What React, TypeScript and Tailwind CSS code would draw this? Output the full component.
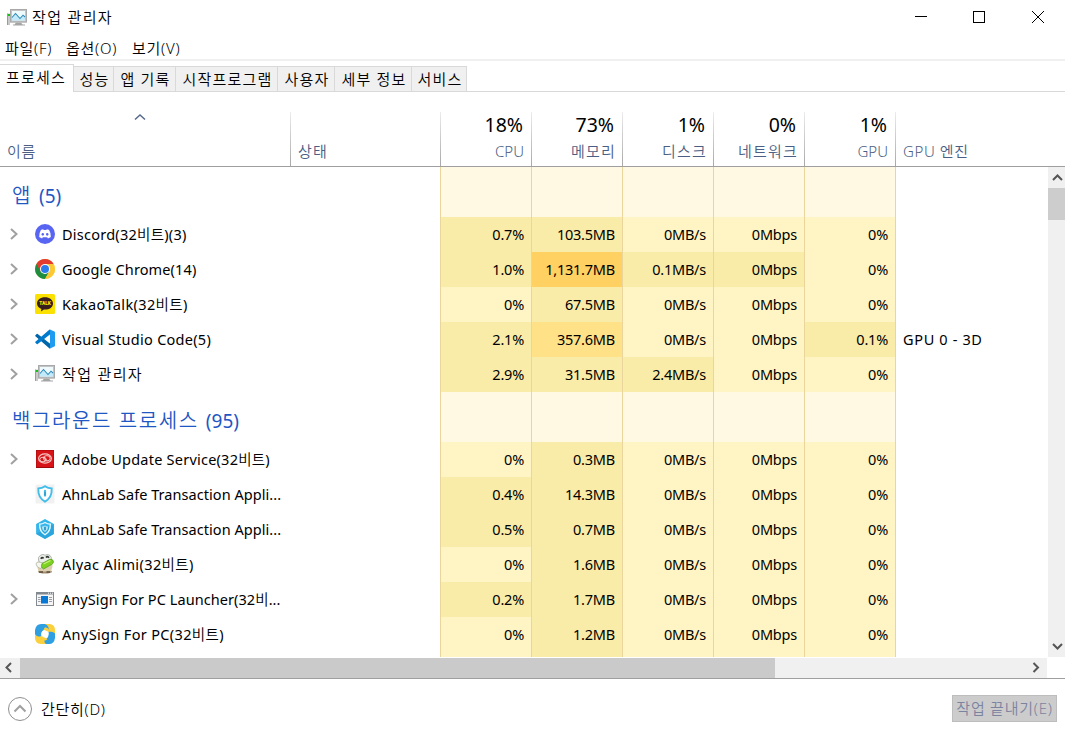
import type { ReactNode } from "react";

type Heat = "low" | "mid" | "high" | "max";
type Cell = [string, Heat];

interface Process {
  name: string;
  tracking: string;
  icon: ReactNode;
  expandable: boolean;
  cells: Cell[];
  engine?: string;
}

const heatClass: Record<Heat, string> = {
  low: "bg-[#fff4c4]",
  mid: "bg-[#f9eca8]",
  high: "bg-[#ffe287]",
  max: "bg-[#ffd062]",
};

// Hangul runs use a lighter weight; Latin and digits keep the inherited one.
function Label({ text, className = "" }: { text: string; className?: string }) {
  return (
    <span className={className}>
      {text.split(/([가-힣]+(?: [가-힣]+)*)/).map((part, i) =>
        i % 2 === 1 ? (
          <span key={i} className="font-[350]">
            {part}
          </span>
        ) : (
          part
        ),
      )}
    </span>
  );
}

function DiscordIcon() {
  return (
    <svg width="20" height="20" viewBox="0 0 20 20">
      <circle cx="10" cy="10" r="10" fill="#5865f2" />
      <path
        d="M5.9 6.1Q7 5.5 8.2 5.3l.5.8h2.6l.5-.8q1.200.2 2.300.8 1.900 2.900 1.700 6.900-1.300 1-2.900 1.400l-.7-1.100H7.800l-.7 1.100Q5.500 14 4.200 13q-.2-4 1.700-6.900z"
        fill="#fff"
      />
      <ellipse cx="7.8" cy="10.300" rx="1.200" ry="1.400" fill="#5865f2" />
      <ellipse cx="12.200" cy="10.300" rx="1.200" ry="1.400" fill="#5865f2" />
    </svg>
  );
}

function ChromeIcon() {
  return (
    <svg width="20" height="20" viewBox="0 0 20 20">
      <circle cx="10" cy="10" r="10" fill="#fcc934" />
      <path d="M10 10 L1.340 5 A10 10 0 0 0 10 20 L14.330 12.500 Z" fill="#1e8e3e" />
      <path d="M10 10 L5.670 12.500 L1.340 5 A10 10 0 0 1 18.660 5 L10 5.200 Z" fill="#e33b2e" />
      <path d="M10 5 H18.660 A10 10 0 0 1 10 20 L14.330 12.500 Z" fill="#fcc934" />
      <circle cx="10" cy="10" r="5" fill="#fff" />
      <circle cx="10" cy="10" r="4" fill="#2b7bea" />
    </svg>
  );
}

function KakaoIcon() {
  return (
    <svg width="20" height="20" viewBox="0 0 20 20">
      <rect width="20" height="20" rx="1.500" fill="#fae100" />
      <path
        d="M10 3.200c4.600 0 8 2.700 8 6.200s-3.400 6.200-8 6.200l-1.100-.1-3 2.100.5-2.700C3.700 13.800 2 11.800 2 9.400c0-3.500 3.400-6.200 8-6.200z"
        fill="#371d1e"
      />
      <text x="10" y="11.400" textAnchor="middle" fontSize="4.800" fontWeight="900" fontFamily="Roboto" fill="#fae100">
        TALK
      </text>
    </svg>
  );
}

function CodeIcon() {
  return (
    <svg width="20" height="20" viewBox="0 0 20 20">
      <path d="M.4 6.200 1.700 5 Q2.200 4.700 2.700 5.100 L15.200 14.800 V19.600 Q14.600 19.700 14 19.100 L.4 7.200 Q0 6.700.4 6.200z" fill="#0065a9" />
      <path d="M.4 13.800 1.700 15 Q2.200 15.300 2.700 14.900 L15.200 5.200 V.4 Q14.600.3 14 .9 L.4 12.800 Q0 13.300.4 13.800z" fill="#007acc" />
      <path d="M14.300.3 19.400 2.500Q20 2.800 20 3.400V16.600Q20 17.200 19.400 17.500L14.300 19.800Q15 19.400 15 18.500V1.500Q15 .6 14.300.3z" fill="#1f9cf0" />
    </svg>
  );
}

function MonitorIcon() {
  return (
    <svg width="20" height="20" viewBox="0 0 20 20">
      <path d="M.5 5.500H3V17H.5z" fill="#c9c9c9" />
      <path d="M.5 5.500V17" stroke="#9b9b9b" fill="none" />
      <rect x="1" y="6" width="2" height="2" fill="#12c312" />
      <path d="M9 14.500h5l1.500 2H18v1H6v-1h1.500z" fill="#a5a5a5" />
      <rect x="3" y="1" width="17" height="13.500" rx=".8" fill="#c3c3c3" />
      <rect x="3.500" y="1.500" width="16" height="12.500" fill="none" stroke="#a9a9a9" />
      <rect x="5" y="3" width="13" height="9.500" fill="#eefafe" />
      <path d="M5 9.500 8.500 6l4.500 4.500L15.500 8 18 9V12.500H5z" fill="#c3eafa" />
      <path d="M5 9.500 8.500 5.500l4.500 5L16 7.200l2 1.800" stroke="#2c8ab8" strokeWidth="1.100" fill="none" />
    </svg>
  );
}

function AdobeIcon() {
  return (
    <svg width="20" height="20" viewBox="0 0 20 20">
      <rect x="1" y="1" width="18" height="18" fill="#9c0a0c" />
      <rect x="1.500" y="1.500" width="17" height="16.500" fill="#d81317" />
      <ellipse cx="10" cy="9.500" rx="6.400" ry="4.600" fill="none" stroke="#f6c9c6" strokeWidth="1.100" />
      <ellipse cx="8" cy="10.500" rx="3.200" ry="2.300" fill="none" stroke="#f6c9c6" strokeWidth="1" />
      <ellipse cx="11.800" cy="9.300" rx="3.400" ry="2.700" fill="none" stroke="#f6c9c6" strokeWidth="1" />
      <path d="m8 8.500 4.500 3.500" stroke="#f6c9c6" />
    </svg>
  );
}

function ShieldIcon() {
  return (
    <svg width="20" height="20" viewBox="0 0 20 20">
      <rect x=".5" y=".5" width="19" height="19" rx="1" fill="#f1f1f2" />
      <path d="M10 2.200q3 2 6.700 2.200 .5 9.300-6.700 13.200Q2.800 13.700 3.300 4.400 7 4.200 10 2.200z" fill="#fff" stroke="#41bde9" strokeWidth="1.900" />
      <path d="M10 6.800v4.800" stroke="#41bde9" strokeWidth="2.200" strokeLinecap="round" />
      <path d="M10 8v3.500" stroke="#2a8ab8" />
    </svg>
  );
}

function ShieldHexIcon() {
  return (
    <svg width="20" height="20" viewBox="0 0 20 20">
      <path d="M10 0 18.900 4.900V15.100L10 20 1.100 15.100V4.900z" fill="#35b5ea" />
      <path d="M18.900 5V15.100L10 20 1.100 15.100 10 10z" fill="#259cd4" opacity=".6" />
      <path d="M10 3.500q2.500 1.600 5.300 1.700.4 7.300-5.300 10.500Q4.300 12.500 4.700 5.200 7.500 5.100 10 3.500z" fill="none" stroke="#e6faff" strokeWidth="1.300" />
      <path d="M10 6.500q1.500 1 3 1.100.1 3.500-3 5.500-3.100-2-3-5.500 1.500-.1 3-1.100z" fill="#aee5f8" />
      <path d="M10 7.800v3.400" stroke="#137bad" strokeWidth="1.400" />
    </svg>
  );
}

function AlyacIcon() {
  return (
    <svg width="20" height="20" viewBox="0 0 20 20">
      <ellipse cx="10" cy="17.700" rx="7" ry="1.900" fill="#a08d72" />
      <path d="M3 9.500q-1 4 .5 8h12q3-4 1.500-9z" fill="#ddd0b0" />
      <path d="M3.500 6Q2.800 3 5.500 1.200q2.500-1.500 4.500 0 3-1.500 5 .3 2 1.700 1.300 4.500L12 10H5z" fill="#eceeea" stroke="#9fa39d" strokeWidth=".8" />
      <path d="M5.800 4.800q1.200-2 2.800-.4M11 3.500q1.500-1.800 3 .2" stroke="#303530" strokeWidth="1.700" fill="none" />
      <path d="M1 10Q1.500 7.500 4 8l6 1.500-4.500 5Q1.500 13.500 1 10z" fill="#f5f6ec" stroke="#9a9f87" strokeWidth=".6" />
      <path d="M7 9.500 15 5.200q3.400-.2 3.500 2.800-.4 1.600-2 2.500L8.500 15Q5.500 13.500 7 9.500z" fill="#7ed321" stroke="#4e9a17" strokeWidth=".7" />
      <path d="M8.500 10 15.500 6.500" stroke="#c6f17d" strokeWidth="1.200" />
      <path d="M4 18h4M11.500 18H15" stroke="#5b4c3b" strokeWidth="1.400" />
    </svg>
  );
}

function WindowIcon() {
  return (
    <svg width="20" height="20" viewBox="0 0 20 20">
      <rect x="1.500" y="3.500" width="17" height="13" fill="#f5f5f5" stroke="#838990" />
      <rect x="1" y="3" width="18" height="2.500" fill="#838990" />
      <path d="M13 4.200h1M15 4.200h1M17 4.200h1" stroke="#fff" />
      <path d="M3 8.500h2.500M3 10.500h2.500M3 12.500h2.500M14 8.500h3M14 10.500h3M14 12.500h3" stroke="#9aa0a5" />
      <rect x="6" y="7" width="7" height="7.500" fill="#0878d4" />
    </svg>
  );
}

function AnySignIcon() {
  return (
    <svg width="20" height="20" viewBox="0 0 20 20">
      <path d="M9 0H15Q20 .8 20 6v6Q18 8.500 14 7.500 12 4 9 3z" fill="#fbd03c" />
      <path d="M20 9.500V14q-.8 6-6 6H9.500Q6 19.500 6 16q4.500.5 7-3 1-2.500.5-5.500 5 0 6.500 2z" fill="#2f9fe2" />
      <path d="M0 9q1.500 2.500 5 3 2 3 5 3.500-1.500 2.500 1 4.500H6Q0 19.500 0 14z" fill="#fbd03c" />
      <path d="M0 10V6Q1 0 6 0h4q2.500.5 3.500 3.500L14 6Q10 4 7.500 7 5.500 9 6.500 12.500 1.500 13 0 10z" fill="#2f9fe2" />
      <path d="M10 3.200q4 .3 4.600 4.400L12.500 8 8.500 5.500z" fill="#fbd03c" />
      <path d="M5.400 12.200q.9 3.800 4.800 4.200 1.300 0 2.300-1.400L7.500 12z" fill="#fbd03c" />
      <circle cx="10" cy="10" r="3.400" fill="#fff" />
    </svg>
  );
}

const apps: Process[] = [
  { name: "Discord(32비트)(3)", tracking: "tracking-[0.25px]", icon: <DiscordIcon />, expandable: true, cells: [["0.7%", "mid"], ["103.5MB", "mid"], ["0MB/s", "low"], ["0Mbps", "low"], ["0%", "low"]] },
  { name: "Google Chrome(14)", tracking: "tracking-[0.12px]", icon: <ChromeIcon />, expandable: true, cells: [["1.0%", "mid"], ["1,131.7MB", "max"], ["0.1MB/s", "mid"], ["0Mbps", "mid"], ["0%", "low"]] },
  { name: "KakaoTalk(32비트)", tracking: "tracking-[0.36px]", icon: <KakaoIcon />, expandable: true, cells: [["0%", "low"], ["67.5MB", "mid"], ["0MB/s", "low"], ["0Mbps", "low"], ["0%", "low"]] },
  { name: "Visual Studio Code(5)", tracking: "tracking-[0.27px]", icon: <CodeIcon />, expandable: true, cells: [["2.1%", "mid"], ["357.6MB", "high"], ["0MB/s", "low"], ["0Mbps", "low"], ["0.1%", "mid"]], engine: "GPU 0 - 3D" },
  { name: "작업 관리자", tracking: "text-[15px] tracking-[1.35px]", icon: <MonitorIcon />, expandable: true, cells: [["2.9%", "mid"], ["31.5MB", "mid"], ["2.4MB/s", "mid"], ["0Mbps", "low"], ["0%", "low"]] },
];

const background: Process[] = [
  { name: "Adobe Update Service(32비트)", tracking: "tracking-[0.23px]", icon: <AdobeIcon />, expandable: true, cells: [["0%", "low"], ["0.3MB", "mid"], ["0MB/s", "low"], ["0Mbps", "low"], ["0%", "low"]] },
  { name: "AhnLab Safe Transaction Appli...", tracking: "tracking-[0.05px]", icon: <ShieldIcon />, expandable: false, cells: [["0.4%", "mid"], ["14.3MB", "mid"], ["0MB/s", "low"], ["0Mbps", "low"], ["0%", "low"]] },
  { name: "AhnLab Safe Transaction Appli...", tracking: "tracking-[0.05px]", icon: <ShieldHexIcon />, expandable: false, cells: [["0.5%", "mid"], ["0.7MB", "mid"], ["0MB/s", "low"], ["0Mbps", "low"], ["0%", "low"]] },
  { name: "Alyac Alimi(32비트)", tracking: "tracking-[0.38px]", icon: <AlyacIcon />, expandable: false, cells: [["0%", "low"], ["1.6MB", "mid"], ["0MB/s", "low"], ["0Mbps", "low"], ["0%", "low"]] },
  { name: "AnySign For PC Launcher(32비...", tracking: "tracking-[0.07px]", icon: <WindowIcon />, expandable: true, cells: [["0.2%", "mid"], ["1.7MB", "mid"], ["0MB/s", "low"], ["0Mbps", "low"], ["0%", "low"]] },
  { name: "AnySign For PC(32비트)", tracking: "tracking-[0.35px]", icon: <AnySignIcon />, expandable: false, cells: [["0%", "low"], ["1.2MB", "mid"], ["0MB/s", "low"], ["0Mbps", "low"], ["0%", "low"]] },
  { name: "", tracking: "tracking-normal", icon: null, expandable: false, cells: [["", "low"], ["", "mid"], ["", "low"], ["", "low"], ["", "low"]] },
];

const metrics = [
  { value: "18%", label: "CPU", tracking: "" },
  { value: "73%", label: "메모리", tracking: "tracking-[1.2px] -mr-px" },
  { value: "1%", label: "디스크", tracking: "tracking-[1.2px] -mr-px" },
  { value: "0%", label: "네트워크", tracking: "tracking-[1.2px] -mr-px" },
  { value: "1%", label: "GPU", tracking: "" },
];

const tabs = [
  { label: "성능", width: "w-10" },
  { label: "앱 기록", width: "w-[62px]" },
  { label: "시작프로그램", width: "w-[102px]" },
  { label: "사용자", width: "w-[57px]" },
  { label: "세부 정보", width: "w-[77px]" },
  { label: "서비스", width: "w-[55px]" },
];

function GroupRow({ title, count }: { title: string; count: number }) {
  return (
    <div className="flex h-[50px] shrink-0">
      <div className="flex w-[440px] items-center gap-[7px] pt-[7px] pl-3 text-[#1f57c3]">
        <span className="text-[20px] font-[350] tracking-[1.6px]">{title}</span>
        <span className="text-[19px]">({count})</span>
      </div>
      {metrics.map((_, i) => (
        <div key={i} className="w-[91px] border-l border-[#ead59d] bg-[#fff8e3]" />
      ))}
      <div className="border-l border-[#ead59d]" />
    </div>
  );
}

function ProcessRow({ process }: { process: Process }) {
  return (
    <div className="flex h-[35px] shrink-0">
      <div className="flex w-[440px] items-center">
        <div className="w-[35px] pl-2.5">
          {process.expandable && (
            <svg width="9" height="12" viewBox="0 0 9 12" className="-mt-0.5">
              <path d="M1 1 6.500 6 1 11" fill="none" stroke="#a0a0a0" strokeWidth="2" />
            </svg>
          )}
        </div>
        <div className="-mt-0.5 w-[27px]">{process.icon}</div>
        <Label text={process.name} className={`pb-0.5 ${process.tracking}`} />
      </div>
      {process.cells.map(([text, heat], i) => (
        <div
          key={i}
          className={`flex w-[91px] items-center justify-end border-l border-[#ead59d] pr-[7px] pb-0.5 tracking-[-0.22px] ${heatClass[heat]}`}
        >
          {text}
        </div>
      ))}
      <div className="flex items-center border-l border-[#ead59d] pb-0.5 pl-[7px] tracking-[0.65px]">{process.engine}</div>
    </div>
  );
}

function Divider() {
  return <div className="h-[54px] w-px shrink-0 self-end bg-linear-to-b from-[#ececec] to-[#a8a8a8]" />;
}

export default function App() {
  return (
    <div className="flex h-[735px] w-[1065px] flex-col overflow-hidden bg-white font-['Noto_Sans','Noto_Sans_CJK_KR',sans-serif] text-[14.500px] leading-5 whitespace-pre text-black">
      <header className="flex h-[35px] shrink-0 items-center pl-[7px]">
        <MonitorIcon />
        <Label text="작업 관리자" className="ml-[5px] flex-1 pb-0.5 text-[15px] tracking-[1.35px]" />
        <svg width="175" height="35" viewBox="0 0 175 35" fill="none" stroke="#000" shapeRendering="crispEdges">
          <path d="M25 16.500h12M83.500 11.500h11v11h-11z" />
          <path d="m142 11 12 12m0-12-12 12" shapeRendering="auto" />
        </svg>
      </header>
      <nav className="flex h-[26px] shrink-0 items-center border-b-2 border-[#f0f0f0] pl-[5px] text-[15px] font-light tracking-[0.75px]">
        <Label text="파일(F)" className="w-[61px] pt-px" />
        <Label text="옵션(O)" className="w-[66px] pt-px" />
        <Label text="보기(V)" className="pt-px" />
      </nav>
      <div className="flex h-[31px] shrink-0 items-end text-[15px] font-[350] tracking-[1.2px]">
        <div className="flex h-7 w-[74px] justify-start border-t border-r border-[#d9d9d9] pt-0.5 pl-1.5">
          프로세스
        </div>
        {tabs.map((tab) => (
          <div
            key={tab.label}
            className={`flex h-[26px] items-center justify-center border-y border-r border-[#d9d9d9] bg-[#f0f0f0] pb-px pl-0.5 ${tab.width}`}
          >
            {tab.label}
          </div>
        ))}
        <div className="flex-1 border-b border-[#d9d9d9]" />
      </div>
      <section className="flex h-[75px] shrink-0 border-b border-[#9f9f9f] text-[15px] font-light text-[#4b5f84]">
        <div className="flex w-[290px] flex-col justify-between pt-[21px] pb-[5px] pl-[7px]">
          <svg width="12" height="8" viewBox="0 0 12 8" className="ml-[127px]">
            <path d="m1 6.500 5-4.500 5 4.500" fill="none" stroke="#58698c" strokeWidth="1.500" />
          </svg>
          <Label text="이름" className="tracking-[0.7px]" />
        </div>
        <Divider />
        <div className="flex w-[149px] items-end pb-[5px] pl-[7px]">
          <Label text="상태" className="tracking-[1.2px]" />
        </div>
        {metrics.map((metric, i) => (
          <div key={i} className="flex w-[91px]">
            <Divider />
            <div className="flex flex-1 flex-col items-end justify-end pr-[7px] pb-[5px]">
              <span className="pr-px text-[19.500px] leading-8 font-normal text-black">{metric.value}</span>
              <Label text={metric.label} className={metric.tracking} />
            </div>
          </div>
        ))}
        <Divider />
        <div className="flex items-end pb-[5px] pl-[7px]">
          <Label text="GPU 엔진" className="tracking-[0.6px]" />
        </div>
      </section>
      <main className="flex h-[490px] shrink-0">
        <div className="flex w-[1048px] flex-col overflow-hidden">
          <GroupRow title="앱" count={5} />
          {apps.map((process) => (
            <ProcessRow key={process.name} process={process} />
          ))}
          <GroupRow title="백그라운드 프로세스" count={95} />
          {background.map((process, i) => (
            <ProcessRow key={i} process={process} />
          ))}
        </div>
        <div className="flex w-[17px] flex-col items-center justify-between bg-[#f0f0f0]">
          <div className="flex flex-col items-center">
            <svg width="17" height="21" viewBox="0 0 17 21">
              <path d="m5 13 4.500-4.500L14 13" fill="none" stroke="#555" strokeWidth="2" />
            </svg>
            <div className="h-8 w-[17px] bg-[#cdcdcd]" />
          </div>
          <svg width="17" height="21" viewBox="0 0 17 21">
            <path d="m5 8 4.500 4.500L14 8" fill="none" stroke="#555" strokeWidth="2" />
          </svg>
        </div>
      </main>
      <div className="flex h-[22px] shrink-0 border-b border-[#9f9f9f] pt-px">
        <div className="flex w-[1047px] justify-between bg-[#f0f0f0]">
          <div className="flex">
            <svg width="20" height="20" viewBox="0 0 20 20">
              <path d="m11 5-4.500 4.500L11 14" fill="none" stroke="#555" strokeWidth="2" />
            </svg>
            <div className="w-[755px] bg-[#cacaca]" />
          </div>
          <svg width="20" height="20" viewBox="0 0 20 20">
            <path d="m6.500 5 4.500 4.500L6.500 14" fill="none" stroke="#555" strokeWidth="2" />
          </svg>
        </div>
      </div>
      <footer className="flex flex-1 items-center justify-between pr-2 pb-px pl-[7px] text-[15px] font-light">
        <div className="flex items-center gap-2 pt-1">
          <svg width="26" height="26" viewBox="0 0 26 26" fill="none">
            <circle cx="13" cy="13" r="11.500" stroke="#8f8f8f" />
            <path d="m7.500 15.500 5.500-5.500 5.500 5.500" stroke="#a0a0a0" strokeWidth="2" />
          </svg>
          <Label text="간단히(D)" className="tracking-[0.7px]" />
        </div>
        <button className="mt-1 flex h-[27px] w-[105px] items-center justify-center border border-[#bdbdbd] bg-[#cccccc] pb-0.5 text-[#7c83a0]">
          <Label text="작업 끝내기(E)" className="tracking-[0.75px]" />
        </button>
      </footer>
    </div>
  );
}
